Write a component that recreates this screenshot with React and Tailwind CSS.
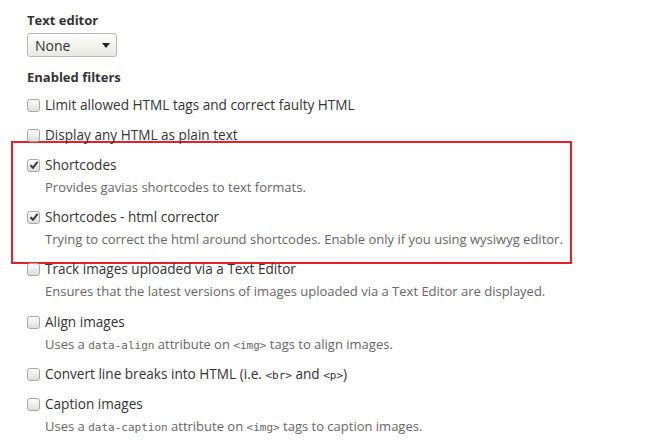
import React from 'react';

const Checkbox = ({ checked }) => (
  <span className="inline-flex items-center justify-center w-[13px] h-[13px] rounded-[3px] border border-[#a9a9a9] bg-gradient-to-b from-[#fcfcfc] to-[#dedede] shrink-0">
    {checked && (
      <svg width="10" height="10" viewBox="0 0 10 10">
        <path d="M1.5 5.2 L4 7.8 L8.6 1.8" fill="none" stroke="#3a3a3a" strokeWidth="2" />
      </svg>
    )}
  </span>
);

const Code = ({ children }) => (
  <span className="font-['DejaVu_Sans_Mono','Liberation_Mono',monospace] text-[11px]">{children}</span>
);

const Filter = ({ label, checked, desc, className = '' }) => (
  <div className={className}>
    <div className="flex items-center gap-[5px] h-[20px] text-[13.6px] text-[#333]">
      <Checkbox checked={checked} />
      <span>{label}</span>
    </div>
    {desc && (
      <div className="pl-[18px] mt-[3px] text-[13px] leading-[18px] text-[#666]">{desc}</div>
    )}
  </div>
);

export default function App() {
  return (
    <div className="w-[648px] h-[440px] bg-white overflow-hidden font-['Open_Sans','Noto_Sans',sans-serif] text-[#333]">
      <div className="pl-[27px] pt-[10px]">
        <div className="text-[13px] font-bold leading-[20px]">Text editor</div>
        <div className="mt-[3px] w-[90px] h-[24px] flex items-center justify-between pl-[7px] pr-[6px] border border-[#b9b9b9] rounded-[3px] bg-gradient-to-b from-[#fdfdfb] to-[#e9e9e4] text-[14px]">
          <span>None</span>
          <svg width="8" height="5" viewBox="0 0 8 5">
            <path d="M0 0 H8 L4 5 Z" fill="#222" />
          </svg>
        </div>
        <div className="mt-[10px] text-[13px] font-bold leading-[20px]">Enabled filters</div>

        <Filter className="mt-[8px]" label="Limit allowed HTML tags and correct faulty HTML" />
        <Filter className="mt-[10px]" label="Display any HTML as plain text" />

        <div className="-ml-[16px] -mt-[4px] w-[561px] border-2 border-[#e3202b] pl-[14px] pt-[12px] pb-[14px]">
          <Filter label="Shortcodes" checked desc="Provides gavias shortcodes to text formats." />
          <Filter
            className="mt-[11px]"
            label="Shortcodes - html corrector"
            checked
            desc="Trying to correct the html around shortcodes. Enable only if you using wysiwyg editor."
          />
        </div>

        <Filter
          className="-mt-[5px]"
          label="Track images uploaded via a Text Editor"
          desc="Ensures that the latest versions of images uploaded via a Text Editor are displayed."
        />
        <Filter
          className="mt-[12px]"
          label="Align images"
          desc={<>Uses a <Code>data-align</Code> attribute on <Code>&lt;img&gt;</Code> tags to align images.</>}
        />
        <Filter
          className="mt-[9px]"
          label={<>Convert line breaks into HTML (i.e. <Code>&lt;br&gt;</Code> and <Code>&lt;p&gt;</Code>)</>}
        />
        <Filter
          className="mt-[10px]"
          label="Caption images"
          desc={<>Uses a <Code>data-caption</Code> attribute on <Code>&lt;img&gt;</Code> tags to caption images.</>}
        />
      </div>
    </div>
  );
}
